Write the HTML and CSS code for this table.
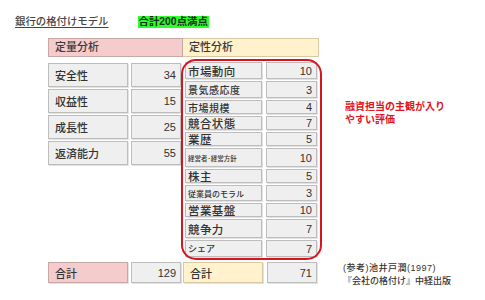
FILE: index.html
```html
<!DOCTYPE html>
<html lang="ja">
<head>
<meta charset="utf-8">
<link rel="stylesheet" href="styles.css">
</head>
<body>
<div class="page">
  <div class="title-row">
    <span class="title">銀行の格付けモデル</span>
    <span class="badge">合計200点満点</span>
  </div>
  <div class="main">
    <div class="sheet">
      <div class="head">
        <div class="hcell pink">定量分析</div>
        <div class="hcell yellow">定性分析</div>
      </div>
      <div class="cols">
        <div class="quant">
          <div class="qrow"><div class="cell label">安全性</div><div class="cell num">34</div></div>
          <div class="qrow"><div class="cell label">収益性</div><div class="cell num">15</div></div>
          <div class="qrow"><div class="cell label">成長性</div><div class="cell num">25</div></div>
          <div class="qrow"><div class="cell label">返済能力</div><div class="cell num">55</div></div>
        </div>
        <div class="qual">
          <div class="row h17"><div class="cell rlabel f11">市場動向</div><div class="cell num">10</div></div>
          <div class="row h17"><div class="cell rlabel f10">景気感応度</div><div class="cell num">3</div></div>
          <div class="row h14"><div class="cell rlabel f10">市場規模</div><div class="cell num">4</div></div>
          <div class="row h14"><div class="cell rlabel f11">競合状態</div><div class="cell num">7</div></div>
          <div class="row h14"><div class="cell rlabel f11">業歴</div><div class="cell num">5</div></div>
          <div class="row h19"><div class="cell rlabel f7">経営者･経営方針</div><div class="cell num">10</div></div>
          <div class="row h14"><div class="cell rlabel f11">株主</div><div class="cell num">5</div></div>
          <div class="row h16"><div class="cell rlabel f8">従業員のモラル</div><div class="cell num">3</div></div>
          <div class="row h14"><div class="cell rlabel f11">営業基盤</div><div class="cell num">10</div></div>
          <div class="row h19"><div class="cell rlabel f11">競争力</div><div class="cell num">7</div></div>
          <div class="row h17"><div class="cell rlabel f9">シェア</div><div class="cell num">7</div></div>
          <div class="ring"></div>
        </div>
      </div>
      <div class="totals">
        <div class="cell tlabel pinkcell">合計</div>
        <div class="cell num tnum1">129</div>
        <div class="cell tlabel yellowcell">合計</div>
        <div class="cell num tnum2">71</div>
      </div>
    </div>
    <div class="notes">
      <p class="remark">融資担当の主観が入り<br>やすい評価</p>
      <p class="ref"><span class="ref-author">(参考)池井戸潤(1997)</span><br>『会社の格付け』中経出版</p>
    </div>
  </div>
</div>
</body>
</html>
```

FILE: styles.css
```css
* { box-sizing: border-box; }
html, body { margin: 0; padding: 0; background: #ffffff; }
body {
  font-family: "Liberation Sans", "Noto Sans CJK JP", sans-serif;
  color: #333333;
  width: 485px;
  height: 300px;
  overflow: hidden;
}
.page { padding: 16px 0 0 15px; }

.title-row {
  display: flex;
  align-items: center;
  gap: 29px;
  height: 12px;
  font-size: 10.4px;
  line-height: 12px;
}
.title {
  color: #444444;
  text-decoration: underline;
  text-underline-offset: 2px;
  font-weight: 500;
}
.badge {
  background: #2cff2c;
  color: #1a2a1a;
  padding: 0 1px;
  font-weight: bold;
}

.main {
  display: flex;
  margin: 10px 0 0 33px;
}
.sheet { width: 271px; }

.head { display: flex; height: 19px; }
.hcell {
  font-size: 11px;
  line-height: 17px;
  padding-left: 6px;
  color: #3a3a3a;
  font-weight: 500;
}
.pink { width: 135px; background: #f4cccc; border: 1px solid #c9a7a7; }
.yellow { width: 136px; background: #fff2cc; border: 1px solid #d8c9a3; border-left: none; }

.cols { display: flex; margin-top: 5px; }

.cell {
  background: #efefef;
  border: 1px solid #bdbdbd;
  box-shadow: 1px 1px 0 #e2e2e2;
  display: flex;
  align-items: center;
  color: #333333;
  font-weight: 500;
}
.num {
  justify-content: flex-end;
  padding-right: 4px;
  font-size: 11px;
  font-weight: normal;
}

.quant {
  width: 133px;
  padding-top: 1px;
  display: flex;
  flex-direction: column;
  gap: 2px;
}
.qrow { display: flex; gap: 3px; height: 24px; }
.qrow .label { width: 80px; padding-left: 6px; font-size: 11px; }
.qrow .num { width: 50px; }

.qual {
  position: relative;
  width: 132px;
  margin-left: 4px;
  display: flex;
  flex-direction: column;
  gap: 2px;
}
.row { display: flex; gap: 4px; }
.row .rlabel { width: 77px; padding-left: 2px; white-space: nowrap; }
.row .num { width: 51px; }
.h14 { height: 14px; }
.h16 { height: 16px; }
.h17 { height: 17px; }
.h19 { height: 19px; }
.f11 { font-size: 11.5px; letter-spacing: 0.4px; }
.f10 { font-size: 10px; letter-spacing: 0.5px; }
.f9 { font-size: 9px; }
.f8 { font-size: 8px; }
.f7 { font-size: 6.5px; }

.ring {
  position: absolute;
  left: -4px;
  right: -5px;
  top: -3px;
  bottom: -3px;
  border: 2.5px solid #d9141e;
  border-radius: 15px;
  pointer-events: none;
}

.totals {
  display: flex;
  height: 21px;
  margin-top: 5px;
}
.tlabel { width: 80px; padding-left: 6px; font-size: 11px; }
.pinkcell { background: #f4cccc; border-color: #c9a7a7; }
.yellowcell { background: #fff2cc; border-color: #d8c9a3; margin-left: 2px; }
.tnum1 { width: 50px; margin-left: 3px; }
.tnum2 { width: 50px; margin-left: 4px; }

.notes {
  margin-left: 26px;
  display: flex;
  flex-direction: column;
}
.remark {
  margin: 62px 0 0 0;
  color: #e3131c;
  font-weight: bold;
  font-size: 10px;
  line-height: 13px;
}
.ref {
  margin: 136px 0 0 -2px;
  color: #333333;
  font-size: 9px;
  line-height: 13px;
  font-weight: 500;
}
.ref-author { letter-spacing: 0.5px; }
```
